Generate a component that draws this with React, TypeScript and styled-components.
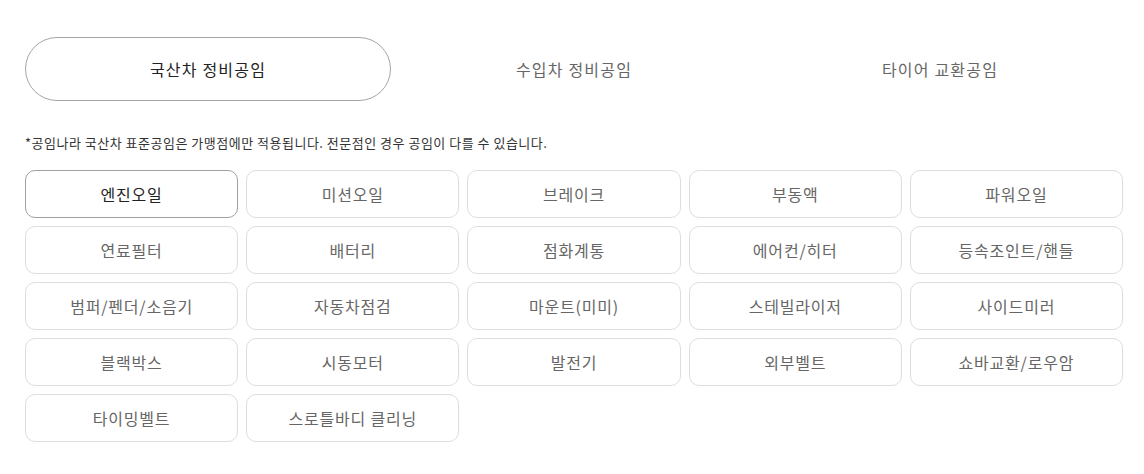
import React, { useState } from 'react';
import styled, { createGlobalStyle } from 'styled-components';

const GlobalStyle = createGlobalStyle`
  body {
    margin: 0;
    background: #fff;
    font-family: "Noto Sans CJK KR", "Noto Sans", sans-serif;
  }
`;

const Wrapper = styled.div`
  width: 1098px;
  padding: 37px 0 0 25px;
`;

const TabRow = styled.div`
  display: grid;
  grid-template-columns: repeat(3, 1fr);
`;

const Tab = styled.button<{ $active: boolean }>`
  height: 64px;
  border-radius: 32px;
  border: 1px solid ${(p) => (p.$active ? '#a5a5a5' : 'transparent')};
  background: #fff;
  font-family: inherit;
  font-size: 16px;
  letter-spacing: 1.2px;
  color: ${(p) => (p.$active ? '#222' : '#666')};
  cursor: pointer;
  padding: 0;
`;

const Notice = styled.p`
  margin: 33px 0 0;
  font-size: 13px;
  letter-spacing: 0.5px;
  line-height: 17px;
  color: #333;
`;

const Grid = styled.div`
  display: grid;
  grid-template-columns: repeat(5, 1fr);
  gap: 8px;
  margin-top: 19px;
`;

const Item = styled.button<{ $active: boolean }>`
  height: 48px;
  border-radius: 10px;
  border: 1px solid ${(p) => (p.$active ? '#a0a0a0' : '#dedede')};
  background: #fff;
  font-family: inherit;
  font-size: 16px;
  letter-spacing: 0.8px;
  color: ${(p) => (p.$active ? '#222' : '#666')};
  cursor: pointer;
  padding: 0;
`;

const tabs = ['국산차 정비공임', '수입차 정비공임', '타이어 교환공임'];

const items = [
  '엔진오일', '미션오일', '브레이크', '부동액', '파워오일',
  '연료필터', '배터리', '점화계통', '에어컨/히터', '등속조인트/핸들',
  '범퍼/펜더/소음기', '자동차점검', '마운트(미미)', '스테빌라이저', '사이드미러',
  '블랙박스', '시동모터', '발전기', '외부벨트', '쇼바교환/로우암',
  '타이밍벨트', '스로틀바디 클리닝',
];

function App() {
  const [tab, setTab] = useState(0);
  const [item, setItem] = useState(0);

  return (
    <Wrapper>
      <GlobalStyle />
      <TabRow>
        {tabs.map((t, i) => (
          <Tab key={t} $active={tab === i} onClick={() => setTab(i)}>
            {t}
          </Tab>
        ))}
      </TabRow>
      <Notice>*공임나라 국산차 표준공임은 가맹점에만 적용됩니다. 전문점인 경우 공임이 다를 수 있습니다.</Notice>
      <Grid>
        {items.map((it, i) => (
          <Item key={it} $active={item === i} onClick={() => setItem(i)}>
            {it}
          </Item>
        ))}
      </Grid>
    </Wrapper>
  );
}

export default App;
